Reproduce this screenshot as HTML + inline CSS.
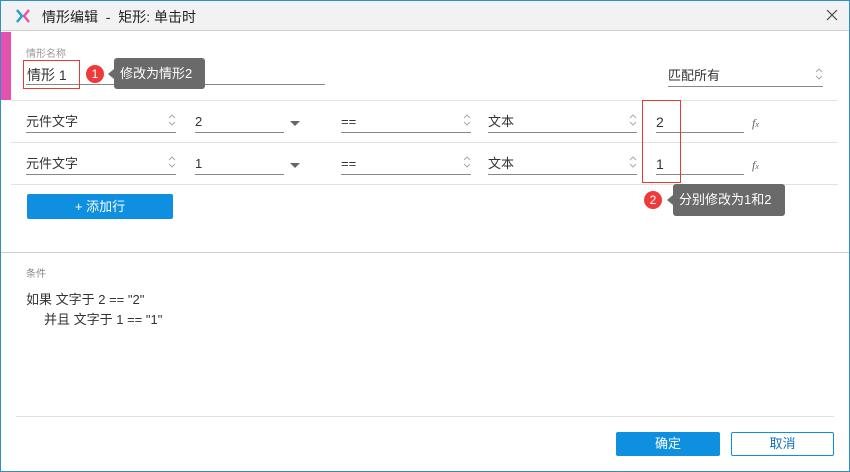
<!DOCTYPE html>
<html><head><meta charset="utf-8"><style>
*{margin:0;padding:0;box-sizing:border-box}
body{width:850px;height:472px;position:relative;background:#fff;font-family:"Liberation Sans","Noto Sans CJK SC",sans-serif;color:#333;overflow:hidden}
.a{position:absolute}
.win{left:0;top:0;width:850px;height:472px;border:1px solid #2f8fc8}
.sel{position:absolute;height:26px;border-bottom:1px solid #888;font-size:13px;line-height:18px;padding-top:6px}
.arr{position:absolute;right:0;top:6px;width:8px;height:14px}
.sep{position:absolute;height:1px;background:#e2e2e2}
.fx{position:absolute;font-family:"Liberation Serif",serif;font-style:italic;font-size:12px;color:#666}
</style></head><body>
<div class="a win"></div>
<div class="a" style="left:1px;top:1px;width:848px;height:30px;background:#f2f2f2;border-bottom:1px solid #d0d0d0"></div>
<svg class="a" style="left:16px;top:9px" width="14" height="14" viewBox="0 0 14 14"><path d="M1 1 L6 7 L1 13" stroke="#1e9be0" stroke-width="2.4" fill="none"/><path d="M13 1 L8 7 L13 13" stroke="#e8559b" stroke-width="2.4" fill="none"/></svg>
<div class="a" style="left:42px;top:7px;font-size:14px;color:#222;white-space:pre">情形编辑  -  矩形: 单击时</div>
<svg class="a" style="left:826px;top:9px" width="12" height="12"><path d="M1 1L11 11M11 1L1 11" stroke="#444" stroke-width="1.2"/></svg>
<div class="a" style="left:1px;top:32px;width:10px;height:68px;background:#e651b0"></div>
<div class="a" style="left:26px;top:45px;font-size:10px;color:#999">情形名称</div>
<div class="a" style="left:26px;top:84px;width:299px;height:1px;background:#888"></div>
<div class="a" style="left:27px;top:65px;font-size:14px">情形 1</div>
<div class="a" style="left:23px;top:60px;width:57px;height:29px;border:1px solid #e53935"></div>
<div class="a" style="left:86px;top:65px;width:18px;height:18px;border-radius:50%;background:#f03a3a;color:#fff;font-size:12px;text-align:center;line-height:18px">1</div>
<div class="a" style="left:108px;top:69px;width:0;height:0;border:5px solid transparent;border-right:6px solid #6a6a6a;border-left:0"></div>
<div class="a" style="left:114px;top:58px;width:91px;height:31px;background:#6a6a6a;border-radius:3px;color:#fff;font-size:13px;line-height:31px;padding-left:6px">修改为情形2</div>
<div class="sel" style="left:668px;top:61px;width:155px">匹配所有<svg class="arr" viewBox="0 0 8 14"><path d="M1 5L4 2L7 5M1 9L4 12L7 9" stroke="#aaa" fill="none"/></svg></div>
<div class="sep" style="left:11px;top:100px;width:827px"></div>
<div class="sep" style="left:11px;top:142px;width:827px"></div>
<div class="sep" style="left:11px;top:184px;width:827px"></div>
<div class="sel" style="left:26px;top:107px;width:150px">元件文字<svg class="arr" viewBox="0 0 8 14"><path d="M1 5L4 2L7 5M1 9L4 12L7 9" stroke="#aaa" fill="none"/></svg></div>
<div class="sel" style="left:195px;top:107px;width:89px">2</div>
<div class="a" style="left:290px;top:121px;border:5px solid transparent;border-top:5px solid #666;border-bottom:0"></div>
<div class="sel" style="left:341px;top:107px;width:130px">==<svg class="arr" viewBox="0 0 8 14"><path d="M1 5L4 2L7 5M1 9L4 12L7 9" stroke="#aaa" fill="none"/></svg></div>
<div class="sel" style="left:488px;top:107px;width:149px">文本<svg class="arr" viewBox="0 0 8 14"><path d="M1 5L4 2L7 5M1 9L4 12L7 9" stroke="#aaa" fill="none"/></svg></div>
<div class="sel" style="left:656px;top:107px;width:88px;font-size:14px">2</div>
<div class="fx" style="left:752px;top:116px">f<span style="font-size:8px">x</span></div>
<div class="sel" style="left:26px;top:149px;width:150px">元件文字<svg class="arr" viewBox="0 0 8 14"><path d="M1 5L4 2L7 5M1 9L4 12L7 9" stroke="#aaa" fill="none"/></svg></div>
<div class="sel" style="left:195px;top:149px;width:89px">1</div>
<div class="a" style="left:290px;top:163px;border:5px solid transparent;border-top:5px solid #666;border-bottom:0"></div>
<div class="sel" style="left:341px;top:149px;width:130px">==<svg class="arr" viewBox="0 0 8 14"><path d="M1 5L4 2L7 5M1 9L4 12L7 9" stroke="#aaa" fill="none"/></svg></div>
<div class="sel" style="left:488px;top:149px;width:149px">文本<svg class="arr" viewBox="0 0 8 14"><path d="M1 5L4 2L7 5M1 9L4 12L7 9" stroke="#aaa" fill="none"/></svg></div>
<div class="sel" style="left:656px;top:149px;width:88px;font-size:14px">1</div>
<div class="fx" style="left:752px;top:158px">f<span style="font-size:8px">x</span></div>
<div class="a" style="left:642px;top:100px;width:39px;height:83px;border:1px solid #e53935"></div>
<div class="a" style="left:644px;top:191px;width:18px;height:18px;border-radius:50%;background:#f03a3a;color:#fff;font-size:12px;text-align:center;line-height:18px">2</div>
<div class="a" style="left:667px;top:195px;border:5px solid transparent;border-right:6px solid #6a6a6a;border-left:0"></div>
<div class="a" style="left:673px;top:184px;width:112px;height:32px;background:#6a6a6a;border-radius:3px;color:#fff;font-size:13px;line-height:32px;padding-left:6px">分别修改为1和2</div>
<div class="a" style="left:27px;top:194px;width:146px;height:25px;background:#0f8fe0;border-radius:2px;color:#fff;font-size:13px;text-align:center;line-height:25px">+ 添加行</div>
<div class="a" style="left:1px;top:252px;width:848px;height:1px;background:#d0d0d0"></div>
<div class="a" style="left:26px;top:265px;font-size:10px;color:#888">条件</div>
<div class="a" style="left:26px;top:290px;font-size:13px;line-height:20px;color:#333;white-space:pre">如果 文字于 2 == "2"</div>
<div class="a" style="left:44px;top:310px;font-size:13px;line-height:20px;color:#333;white-space:pre">并且 文字于 1 == "1"</div>
<div class="a" style="left:16px;top:416px;width:818px;height:1px;background:#e0e0e0"></div>
<div class="a" style="left:616px;top:432px;width:104px;height:24px;background:#0f8fe0;border-radius:2px;color:#fff;font-size:13px;text-align:center;line-height:24px">确定</div>
<div class="a" style="left:731px;top:432px;width:103px;height:24px;border:1px solid #0f8fe0;border-radius:2px;color:#0f70c0;font-size:13px;text-align:center;line-height:22px">取消</div>
</body></html>
